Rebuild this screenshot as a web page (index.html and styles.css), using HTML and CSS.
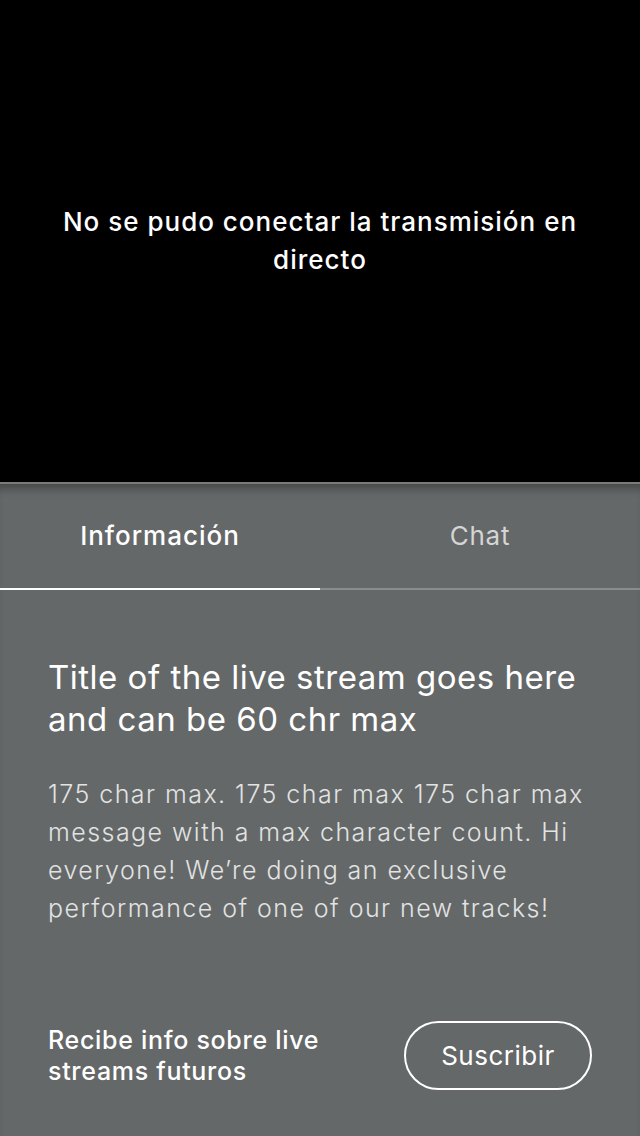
FILE: index.html
```html
<!DOCTYPE html>
<html lang="es">
<head>
<meta charset="utf-8">
<title>Live stream</title>
<link rel="stylesheet" href="styles.css">
</head>
<body>
<div class="screen">
  <section class="video">
    <p class="video-error">No se pudo conectar la transmisión en directo</p>
  </section>
  <section class="panel">
    <nav class="tabs">
      <div class="tab tab-active">Información</div>
      <div class="tab">Chat</div>
    </nav>
    <div class="content">
      <h1 class="title">Title of the live stream goes here and can be 60 chr max</h1>
      <p class="desc">175 char max. 175 char max 175 char max message with a max character count. Hi everyone! We’re doing an exclusive performance of one of our new tracks!</p>
    </div>
    <div class="footer">
      <p class="footer-text">Recibe info sobre live streams futuros</p>
      <button class="subscribe">Suscribir</button>
    </div>
  </section>
</div>
</body>
</html>
```
FILE: styles.css
```css
* { box-sizing: border-box; }
html, body { margin: 0; padding: 0; }
body {
  font-family: Inter, Roboto, sans-serif;
  background: #656868;
  color: #fff;
}
.screen {
  width: 640px;
  height: 1136px;
  display: flex;
  flex-direction: column;
  overflow: hidden;
}
.video {
  height: 482px;
  background: #000;
  display: flex;
  align-items: center;
  justify-content: center;
  padding: 0 40px;
}
.video-error {
  margin: 0;
  text-align: center;
  font-size: 26px;
  font-weight: 500;
  line-height: 38px;
  letter-spacing: 1px;
}
.panel {
  flex: 1;
  display: flex;
  flex-direction: column;
  background: #656868;
  border-top: 2px solid #7a7c7c;
  box-shadow: inset 0 10px 10px -6px rgba(0,0,0,0.35);
}
.tabs {
  display: flex;
  height: 106px;
  border-bottom: 2px solid #8a8c8c;
}
.tab {
  flex: 1;
  display: flex;
  align-items: center;
  justify-content: center;
  padding-bottom: 2px;
  font-size: 26px;
  letter-spacing: 0.75px;
  color: #d4d5d5;
  margin-bottom: -2px;
  border-bottom: 2px solid transparent;
}
.tab-active {
  color: #fff;
  font-weight: 500;
  letter-spacing: 1px;
  border-bottom-color: #fff;
}
.content {
  flex: 1;
  padding: 66px 40px 0 48px;
}
.title {
  margin: 0;
  font-size: 33px;
  font-weight: 400;
  line-height: 42px;
  letter-spacing: 0.5px;
  color: #fff;
}
.desc {
  margin: 35px 0 0 0;
  font-size: 25px;
  font-weight: 300;
  line-height: 38px;
  letter-spacing: 1.45px;
  color: #e2e3e3;
}
.footer {
  display: flex;
  align-items: center;
  justify-content: space-between;
  padding: 0 48px 46px 48px;
}
.footer-text {
  margin: 0;
  width: 300px;
  font-size: 25px;
  font-weight: 500;
  line-height: 31px;
  letter-spacing: 0.7px;
  color: #fff;
}
.subscribe {
  width: 188px;
  height: 69px;
  border: 2px solid #fff;
  border-radius: 35px;
  background: transparent;
  color: #fff;
  font-family: Inter, Roboto, sans-serif;
  font-size: 26px;
  font-weight: 400;
  letter-spacing: 0.5px;
  padding: 0;
}
```
